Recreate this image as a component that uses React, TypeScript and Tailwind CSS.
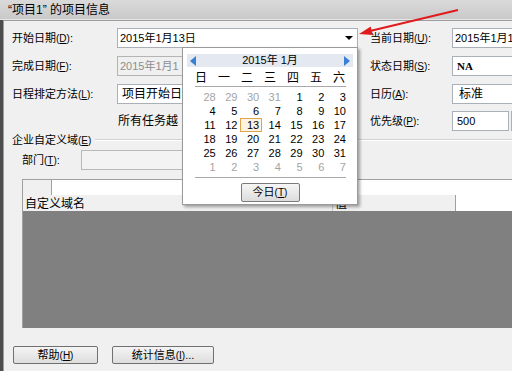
import React from "react";

const prevDays = [28, 29, 30, 31];
const weekDays = ["日", "一", "二", "三", "四", "五", "六"];

const cells: { d: number; muted: boolean }[] = [
  ...prevDays.map((d) => ({ d, muted: true })),
  ...Array.from({ length: 31 }, (_, i) => ({ d: i + 1, muted: false })),
  ...Array.from({ length: 7 }, (_, i) => ({ d: i + 1, muted: true })),
];

const Hot = ({ k }: { k: string }) => (
  <span className="text-[10px]">
    (<span className="underline">{k}</span>)
  </span>
);

const Field = ({ w, children, disabled }: { w: string; children?: React.ReactNode; disabled?: boolean }) => (
  <div
    className={`${w} h-[20px] shrink-0 border flex items-center pl-[2px] whitespace-nowrap overflow-hidden ${
      disabled ? "bg-[#f0f0f0] border-[#b4b4b4] text-[#8d8d8d]" : "bg-white border-[#a9b0b8] text-black"
    }`}
  >
    {children}
  </div>
);

const Calendar = () => (
  <div className="absolute left-[182px] top-[47px] w-[176px] h-[158px] bg-white border border-[#9a9a9a] shadow-[2px_2px_3px_rgba(0,0,0,0.35)] flex flex-col items-center">
    <div className="mt-[6px] w-[166px] h-[13px] bg-[#e3e8f1] flex items-center justify-between px-[3px]">
      <span className="w-0 h-0 border-y-[5px] border-y-transparent border-r-[6px] border-r-[#3a7fd6]" />
      <span className="text-[11px] leading-none">2015年 1月</span>
      <span className="w-0 h-0 border-y-[5px] border-y-transparent border-l-[6px] border-l-[#3a7fd6]" />
    </div>
    <div className="mt-[3px] w-[161px] grid grid-cols-7 h-[16px] items-center text-[12px]">
      {weekDays.map((w) => (
        <span key={w} className="text-center leading-none">
          {w}
        </span>
      ))}
    </div>
    <div className="w-[151px] border-t border-[#a8a8a8]" />
    <div className="mt-[3px] w-[152px] grid grid-cols-7 text-[11px]">
      {cells.map((c, i) => (
        <div key={i} className="h-[14px] flex items-center justify-end">
          {!c.muted && c.d === 13 ? (
            <span className="border border-[#e0a44a] bg-[#fdf3e2] leading-[12px] pl-[6px] pr-[2px] -mr-[3px]">13</span>
          ) : (
            <span className={`leading-none ${c.muted ? "text-[#a3a3a3]" : "text-black"}`}>{c.d}</span>
          )}
        </div>
      ))}
    </div>
    <div className="mt-[3px] w-[151px] border-t border-[#a8a8a8]" />
    <div className="mt-[5px] w-[59px] h-[19px] border border-[#7a7a7a] rounded-[2px] bg-gradient-to-b from-[#f6f6f6] to-[#dcdcdc] flex items-center justify-center text-[11px]">
      今日<Hot k="T" />
    </div>
  </div>
);

export default function App() {
  return (
    <div className="relative w-[512px] h-[371px] overflow-hidden bg-[#f0f0f0] text-black text-[11px] font-['Liberation_Sans','Noto_Sans_CJK_SC',sans-serif]">
      <div className="h-[20px] bg-gradient-to-b from-[#dadada] to-[#c9c9c9] flex items-center pl-[8px] text-[12px] border-b border-[#e6e6e6]">
        “项目1” 的项目信息
      </div>
      <div className="flex h-[351px]">
        <div className="w-[3px] bg-[#4d4d4d]" />
        <div className="flex-1 border-t border-l border-[#9c9c9c] flex flex-col pl-[8px] min-w-0">
          <div className="mt-[7px] flex flex-col gap-[8px]">
            <div className="flex items-center h-[20px]">
              <div className="w-[105px] shrink-0">开始日期<Hot k="D" />:</div>
              <Field w="w-[241px]">
                2015年1月13日
                <span className="ml-auto mr-[4px] w-0 h-0 border-x-[4px] border-x-transparent border-t-[4px] border-t-black" />
              </Field>
              <div className="w-[12px] shrink-0" />
              <div className="w-[82px] shrink-0">当前日期<Hot k="U" />:</div>
              <Field w="w-[90px]">2015年1月1</Field>
            </div>
            <div className="flex items-center h-[20px]">
              <div className="w-[105px] shrink-0">完成日期<Hot k="F" />:</div>
              <Field w="w-[241px]" disabled>
                2015年1月1
              </Field>
              <div className="w-[12px] shrink-0" />
              <div className="w-[82px] shrink-0">状态日期<Hot k="S" />:</div>
              <Field w="w-[90px]">
                <span className="font-['Liberation_Serif'] font-bold text-[11px] pl-[2px]">NA</span>
              </Field>
            </div>
            <div className="flex items-center h-[20px]">
              <div className="w-[105px] shrink-0">日程排定方法<Hot k="L" />:</div>
              <Field w="w-[241px]">
                <span className="pl-[2px] text-[12px]">项目开始日</span>
              </Field>
              <div className="w-[12px] shrink-0" />
              <div className="w-[82px] shrink-0">日历<Hot k="A" />:</div>
              <Field w="w-[90px]">
                <span className="pl-[4px] text-[12px]">标准</span>
              </Field>
            </div>
            <div className="flex items-center h-[20px] -mt-[1px]">
              <div className="w-[106px] shrink-0" />
              <div className="w-[240px] shrink-0 text-[12px] whitespace-nowrap">
                <span className="inline-block w-[62px] overflow-hidden align-middle">所有任务越</span>
              </div>
              <div className="w-[12px] shrink-0" />
              <div className="w-[82px] shrink-0">优先级<Hot k="P" />:</div>
              <Field w="w-[57px]">
                <span className="pl-[2px]">500</span>
              </Field>
              <div className="ml-[2px] w-[20px] h-[20px] border border-[#a9b0b8] bg-white shrink-0" />
            </div>
          </div>

          <div className="mt-[2px] flex items-center h-[14px]">
            <span className="whitespace-nowrap">企业自定义域<Hot k="E" /></span>
            <div className="ml-[4px] flex-1 border-t border-b border-t-[#d0d0d0] border-b-white" />
          </div>

          <div className="mt-[3px] flex items-center h-[20px] pl-[10px]">
            <div className="w-[59px] shrink-0">部门<Hot k="T" />:</div>
            <div className="w-[270px] h-[20px] bg-[#f3f3f3] border border-[#b8b8b8]" />
          </div>

          <div className="mt-[9px] ml-[10px] h-[149px] border-t border-l border-[#a0a0a0] flex flex-col">
            <div className="h-[15px] flex bg-white">
              <div className="w-[29px] bg-[#f0f0f0] border-r border-[#a0a0a0]" />
            </div>
            <div className="h-[16px] flex items-end text-[12px] leading-none">
              <div className="w-[310px] h-full bg-[#f0f0f0] border-r border-[#c8c8c8] flex items-end pl-[2px] pb-[1px]">
                自定义域名
              </div>
              <div className="w-[123px] h-full bg-[#f0f0f0] border-r border-[#a0a0a0] flex items-end pl-[2px] pb-[1px]">
                值
              </div>
              <div className="flex-1 h-full bg-white" />
            </div>
            <div className="flex-1 bg-[#808080]" />
          </div>

          <div className="mt-[18px] flex gap-[14px] pl-[1px]">
            <button className="w-[85px] h-[18px] border border-[#707070] rounded-[2px] bg-gradient-to-b from-[#f4f4f4] to-[#dedede] text-[11px] flex items-center justify-center">
              帮助<Hot k="H" />
            </button>
            <button className="w-[102px] h-[18px] border border-[#707070] rounded-[2px] bg-gradient-to-b from-[#f4f4f4] to-[#dedede] text-[11px] flex items-center justify-center">
              统计信息<Hot k="I" />...
            </button>
          </div>
        </div>
      </div>

      <Calendar />

      <svg className="absolute left-0 top-0 pointer-events-none" width="512" height="371">
        <line x1="370" y1="31" x2="458" y2="10" stroke="#e11b1b" strokeWidth="2" />
        <polygon points="359,34 372.5,35 370.7,26.5" fill="#e11b1b" />
      </svg>
    </div>
  );
}
